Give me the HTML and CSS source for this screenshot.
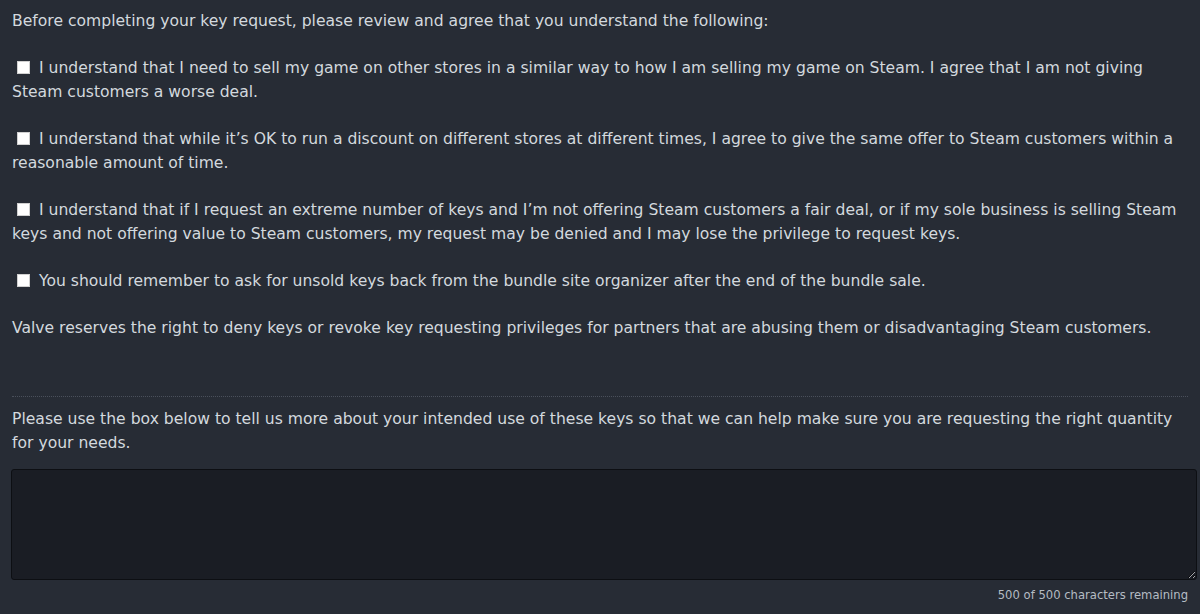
FILE: index.html
```html
<!DOCTYPE html>
<html>
<head>
<meta charset="utf-8">
<link rel="stylesheet" href="styles.css">
</head>
<body>
<div class="page">
  <p class="intro">Before completing your key request, please review and agree that you understand the following:</p>
  <label class="item"><input type="checkbox" class="box"> I understand that I need to sell my game on other stores in a similar way to how I am selling my game on Steam. I agree that I am not giving Steam customers a worse deal.</label>
  <label class="item"><input type="checkbox" class="box"> I understand that while it’s OK to run a discount on different stores at different times, I agree to give the same offer to Steam customers within a reasonable amount of time.</label>
  <label class="item"><input type="checkbox" class="box"> I understand that if I request an extreme number of keys and I’m not offering Steam customers a fair deal, or if my sole business is selling Steam keys and not offering value to Steam customers, my request may be denied and I may lose the privilege to request keys.</label>
  <label class="item"><input type="checkbox" class="box"> You should remember to ask for unsold keys back from the bundle site organizer after the end of the bundle sale.</label>
  <p class="note">Valve reserves the right to deny keys or revoke key requesting privileges for partners that are abusing them or disadvantaging Steam customers.</p>
  <hr class="sep">
  <p class="ask">Please use the box below to tell us more about your intended use of these keys so that we can help make sure you are requesting the right quantity for your needs.</p>
  <textarea class="input"></textarea>
  <div class="count">500 of 500 characters remaining</div>
</div>
</body>
</html>
```
FILE: styles.css
```css
html, body {
  margin: 0;
  padding: 0;
  background: #272c35;
}
.page {
  padding: 9px 12px 0 12px;
  font-family: "DejaVu Sans", Verdana, sans-serif;
  font-size: 15.6px;
  line-height: 24px;
  color: #d3d9de;
}
p { margin: 0; }
.intro { margin-bottom: 23px; }
.item {
  display: block;
  margin-bottom: 23px;
}
.box {
  appearance: none;
  -webkit-appearance: none;
  width: 13px;
  height: 13px;
  margin: 0 4px 0 5px;
  background: #ffffff;
  border: 1px solid #d0d0d0;
  vertical-align: -1px;
}
.note { margin-bottom: 56px; }
.sep {
  border: 0;
  border-top: 1px dotted #4a505b;
  margin: 0 0 10px 0;
  height: 0;
}
.ask { margin-bottom: 14px; }
.input {
  display: block;
  box-sizing: border-box;
  width: 1186px;
  margin-left: -1px;
  height: 111px;
  background: #1a1d24;
  border: 1px solid #0d0f13;
  border-radius: 3px;
  resize: vertical;
  color: #c9d1d9;
}
.count {
  text-align: right;
  font-size: 11.6px;
  line-height: 16px;
  color: #b5bcc4;
  padding: 7px 0 0 0;
}
```
